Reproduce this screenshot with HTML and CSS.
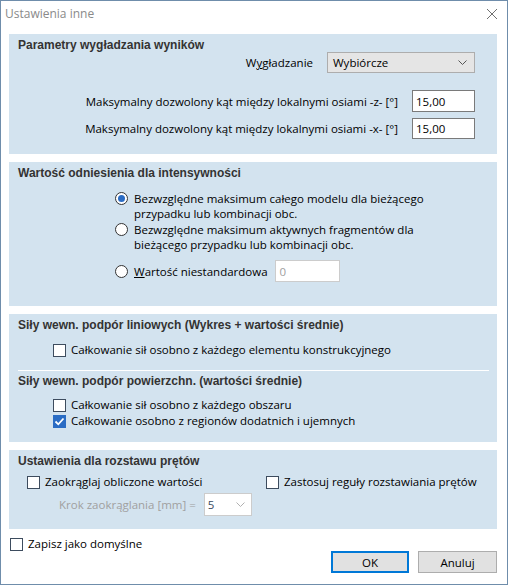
FILE: index.html
```html
<!DOCTYPE html>
<html lang="pl">
<head>
    <meta charset="UTF-8">
    <title>Ustawienia inne</title>
    <link rel="stylesheet" href="styles.css">
</head>
<body>

<div class="dialog">
    <div class="titlebar">
        <span class="title">Ustawienia inne</span>
        <svg class="close" width="12" height="12" viewBox="0 0 12 12">
            <path d="M1 1 L11 11 M11 1 L1 11" stroke="#707070" stroke-width="1" fill="none"/>
        </svg>
    </div>

    <div class="content">
        <!-- wygladzanie -->
        <div class="panel panel-smooth">
            <div class="heading">Parametry wygładzania wyników</div>
            <div class="form-row row-select">
                <label>W<u>y</u>gładzanie</label>
                <div class="select">
                    <span>Wybiórcze</span>
                    <svg class="chev" width="9" height="5" viewBox="0 0 9 5"><path d="M0.5 0.5 L4.5 4.5 L8.5 0.5" stroke="#555" fill="none"/></svg>
                </div>
            </div>
            <div class="form-row row-input1">
                <label>Maksymalny dozwolony kąt między lokalnymi osiami -z- [°]</label>
                <div class="input">15,00</div>
            </div>
            <div class="form-row row-input2">
                <label>Maksymalny dozwolony kąt między lokalnymi osiami -x- [°]</label>
                <div class="input">15,00</div>
            </div>
        </div>

        <!-- intensywnosc -->
        <div class="panel panel-ref">
            <div class="heading">Wartość odniesienia dla intensywności</div>
            <div class="radios">
                <div class="radio-opt">
                    <span class="radio checked"></span>
                    <span class="radio-text">Bezwzględne maksimum całego modelu dla bieżącego<br>przypadku lub kombinacji obc.</span>
                </div>
                <div class="radio-opt opt2">
                    <span class="radio"></span>
                    <span class="radio-text">Bezwzględne maksimum aktywnych fragmentów dla<br>bieżącego przypadku lub kombinacji obc.</span>
                </div>
                <div class="radio-opt opt3">
                    <span class="radio"></span>
                    <span class="radio-text"><u>W</u>artość niestandardowa</span>
                    <div class="input input-off">0</div>
                </div>
            </div>
        </div>

        <!-- sily podpor -->
        <div class="panel panel-forces">
            <div class="heading">Siły wewn. podpór liniowych (Wykres + wartości średnie)</div>
            <div class="check-list first-list">
                <div class="check-opt"><span class="check"></span>Całkowanie sił osobno z każdego elementu konstrukcyjnego</div>
            </div>
            <div class="separator"></div>
            <div class="heading">Siły wewn. podpór powierzchn. (wartości średnie)</div>
            <div class="check-list second-list">
                <div class="check-opt"><span class="check"></span>Całkowanie sił osobno z każdego obszaru</div>
                <div class="check-opt"><span class="check checked"><svg width="11" height="11" viewBox="0 0 11 11"><path d="M1.5 5.5 L4.3 8.3 L9.5 2.5" stroke="#fff" stroke-width="1.8" fill="none"/></svg></span>Całkowanie osobno z regionów dodatnich i ujemnych</div>
            </div>
        </div>

        <!-- prety -->
        <div class="panel panel-bars">
            <div class="heading">Ustawienia dla rozstawu prętów</div>
            <div class="bars-grid">
                <div class="check-opt"><span class="check"></span>Zaokrąglaj obliczone wartości</div>
                <div class="check-opt"><span class="check"></span>Zastosuj reguły rozstawiania prętów</div>
            </div>
            <div class="step-row">
                <span class="muted">Krok zaokrąglania [mm] =</span>
                <div class="select select-off">
                    <span>5</span>
                    <svg class="chev" width="9" height="5" viewBox="0 0 9 5"><path d="M0.5 0.5 L4.5 4.5 L8.5 0.5" stroke="#b0b0b0" fill="none"/></svg>
                </div>
            </div>
        </div>

        <div class="footer">
            <div class="check-opt default-opt"><span class="check"></span>Zapisz jako domyślne</div>
            <div class="buttons">
                <button class="btn btn-ok">OK</button>
                <button class="btn">Anuluj</button>
            </div>
        </div>
    </div>
</div>

</body>
</html>
```

FILE: styles.css
```css
body {
    margin: 0;
    padding: 0;
    background-color: #fff;
    font-family: "Open Sans", "Noto Sans", sans-serif;
    font-size: 11.5px;
    color: #000;
}
.dialog {
    width: 508px;
    height: 585px;
    box-sizing: border-box;
    border: 1px solid #6f8dab;
    background-color: #fff;
}
.titlebar {
    height: 33px;
    display: flex;
    align-items: center;
    justify-content: space-between;
    padding: 0 9px 0 4px;
    margin-top: -4px;
}
.title {
    color: #8a8a8a;
    font-size: 12px;
}
.close {
    display: block;
}
.content {
    display: flex;
    flex-direction: column;
    gap: 8px;
    padding: 4px 10px 0 8px;
}
.panel {
    background-color: #d3e3ef;
    box-sizing: border-box;
    padding: 5px 9px 0 9px;
}
.panel-smooth { height: 120px; }
.panel-ref { height: 144px; }
.panel-forces { height: 128px; }
.panel-bars { height: 79px; }

.heading {
    font-family: "Liberation Sans", Arial, sans-serif;
    font-weight: bold;
    font-size: 12px;
    line-height: 13px;
    color: #333;
}

/* panel 1 */
.form-row {
    display: flex;
    justify-content: flex-end;
    align-items: center;
    gap: 14px;
    padding-right: 13px;
}
.row-input1 { margin-top: 17px; }
.row-input2 { margin-top: 6px; }
.select {
    width: 148px;
    height: 21px;
    box-sizing: border-box;
    border: 1px solid #adadad;
    background-color: #e5e5e5;
    display: flex;
    align-items: center;
    justify-content: space-between;
    padding: 0 7px 0 5px;
}
.chev {
    display: block;
}
.input {
    width: 63px;
    height: 22px;
    box-sizing: border-box;
    border: 1px solid #7a7a7a;
    background-color: #fff;
    padding: 0 3px;
    display: flex;
    align-items: center;
}
.row-input2 .input {
    height: 21px;
}

/* panel 2 */
.radios {
    margin: 11px 0 0 97px;
}
.radio-opt {
    display: flex;
    align-items: flex-start;
    gap: 6px;
    line-height: 15px;
}
.opt2 {
    margin-top: 1px;
}
.opt3 {
    margin-top: 8px;
    align-items: center;
}
.radio {
    width: 13px;
    height: 13px;
    box-sizing: border-box;
    border: 1px solid #333;
    border-radius: 50%;
    background-color: #fff;
    margin-top: 1px;
    flex-shrink: 0;
    display: flex;
    align-items: center;
    justify-content: center;
}
.opt3 .radio {
    margin-top: 0;
}
.radio.checked::after {
    content: "";
    width: 7px;
    height: 7px;
    border-radius: 50%;
    background-color: #2a6cc4;
}
.input-off {
    width: 65px;
    border-color: #cccccc;
    color: #a0a0a0;
    padding-left: 4px;
    margin-left: 1px;
}

/* panel 3 */
.check-list {
    padding-left: 35px;
}
.first-list { margin-top: 10px; }
.second-list { margin-top: 9px; }
.check-opt {
    display: flex;
    align-items: center;
    gap: 5px;
    line-height: 16px;
}
.check {
    width: 13px;
    height: 13px;
    box-sizing: border-box;
    border: 1px solid #3d4c5e;
    background-color: #fff;
    flex-shrink: 0;
    display: flex;
    align-items: center;
    justify-content: center;
}
.check.checked {
    background-color: #2a6cc4;
    border-color: #2a6cc4;
}
.check svg {
    display: block;
}
.separator {
    height: 1px;
    background-color: #fff;
    margin: 12px -1px 4px 0;
}

/* panel 4 */
.bars-grid {
    display: grid;
    grid-template-columns: 239px 1fr;
    padding-left: 9px;
    margin-top: 6px;
}
.step-row {
    display: flex;
    align-items: center;
    gap: 8px;
    padding-left: 41px;
    margin-top: 3px;
}
.muted {
    color: #a0a0a0;
}
.select-off {
    width: 48px;
    height: 23px;
    background-color: #fff;
    border-color: #cccccc;
    padding: 0 6px 0 3px;
    color: #3a4a60;
}

/* footer */
.footer {
    padding-left: 1px;
}
.default-opt {
    line-height: 14px;
}
.buttons {
    display: flex;
    justify-content: flex-end;
    gap: 9px;
}
.btn {
    width: 79px;
    height: 22px;
    box-sizing: border-box;
    border: 1px solid #adadad;
    background-color: #e1e1e1;
    font-family: "Open Sans", "Noto Sans", sans-serif;
    font-size: 11.5px;
    color: #000;
    padding: 0;
}
.btn-ok {
    width: 78px;
    border: 2px solid #0078d7;
}
```
